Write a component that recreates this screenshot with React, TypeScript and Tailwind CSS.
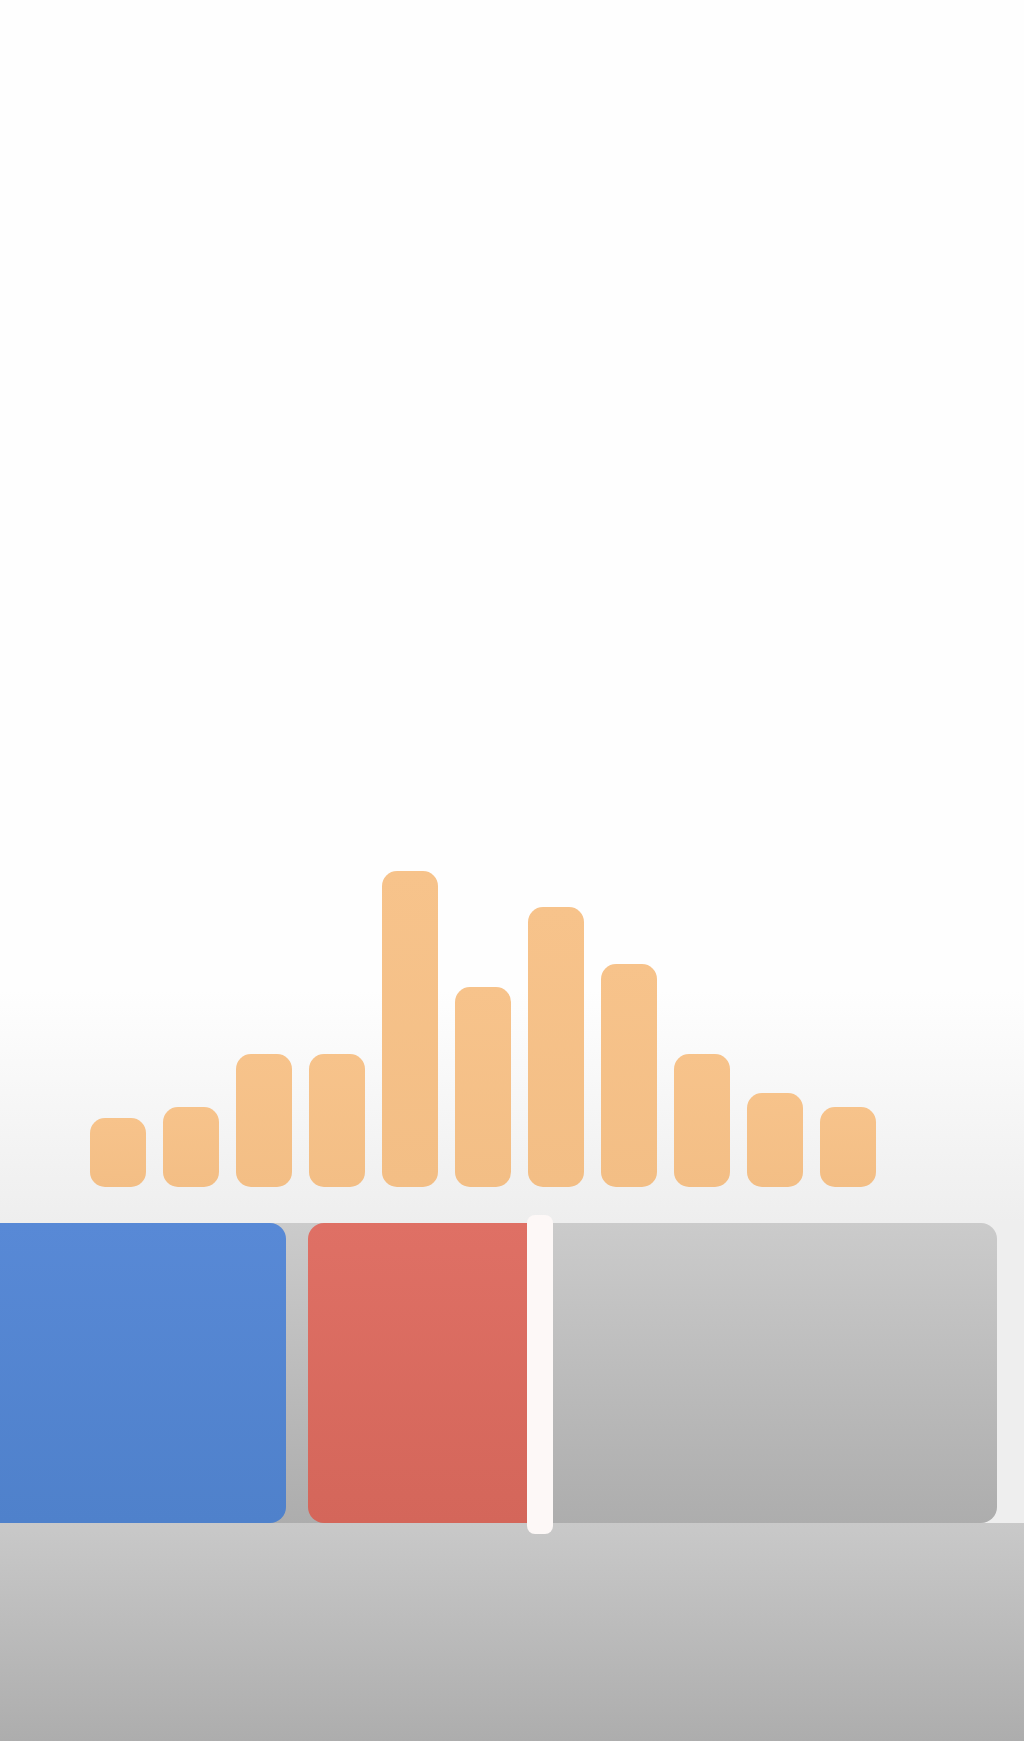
import React from "react";

const bars = [69, 80, 133, 133, 316, 200, 280, 223, 133, 94, 80];

export default function App() {
  return (
    <div className="flex h-[1741px] w-full flex-col overflow-hidden" style={{ fontFamily: '"Liberation Sans", sans-serif' }}>
      <div className="flex h-[1223px] items-end bg-[linear-gradient(to_bottom,#fefefe_0%,#fefefe_81%,#eeeeee_100%)] pb-[36px] pl-[90px]">
        <div className="flex items-end gap-[17px]">
          {bars.map((h, i) => (
            <div
              key={i}
              className="w-[56px] rounded-[15px] bg-gradient-to-b from-[#f7c38b] to-[#f3be85]"
              style={{ height: h }}
            />
          ))}
        </div>
      </div>
      <div className="relative h-[300px] bg-[#eeeeee]">
        <div className="flex h-full w-[997px] rounded-r-[16px] bg-gradient-to-b from-[#cbcbcb] to-[#adadad]">
          <div className="h-full w-[286px] rounded-r-[16px] bg-gradient-to-b from-[#5889d6] to-[#4f81cb]" />
          <div className="ml-[22px] h-full w-[220px] rounded-l-[16px] bg-gradient-to-b from-[#df7065] to-[#d4665a]" />
        </div>
        <div className="absolute left-[527px] top-[-8px] h-[319px] w-[26px] rounded-[8px] bg-[#fdf8f7]" />
      </div>
      <div className="h-[218px] bg-gradient-to-b from-[#c9c9c9] to-[#adadad]" />
    </div>
  );
}
